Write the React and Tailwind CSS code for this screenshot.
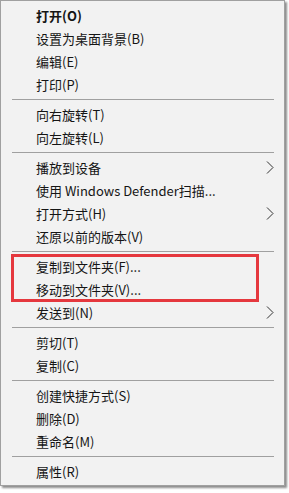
import React from "react";

const groups = [
  [
    { t: "打开(O)", bold: true },
    { t: "设置为桌面背景(B)" },
    { t: "编辑(E)" },
    { t: "打印(P)" },
  ],
  [{ t: "向右旋转(T)" }, { t: "向左旋转(L)" }],
  [
    { t: "播放到设备", sub: true },
    { t: "使用 Windows Defender扫描..." },
    { t: "打开方式(H)", sub: true },
    { t: "还原以前的版本(V)" },
  ],
  "HL",
  [{ t: "剪切(T)" }, { t: "复制(C)" }],
  [{ t: "创建快捷方式(S)" }, { t: "删除(D)" }, { t: "重命名(M)" }],
  [{ t: "属性(R)" }],
];

function Arrow() {
  return (
    <svg width="8" height="13" viewBox="0 0 8 13" className="absolute right-[10px] top-[5px]">
      <path d="M1 0.5 L7 6.5 L1 12.5" fill="none" stroke="#333" strokeWidth="1" />
    </svg>
  );
}

function Row({ item }) {
  return (
    <div className="relative h-[23px] flex items-center pl-[35px]">
      <span
        className={
          "text-[13px] leading-none text-[#151515] whitespace-nowrap " +
          (item.bold ? "font-bold" : "")
        }
      >
        {item.t}
      </span>
      {item.sub && <Arrow />}
    </div>
  );
}

function Sep() {
  return (
    <div className="h-[7px] flex items-center pl-[11px] pr-[10px]">
      <div className="h-px w-full bg-[#a0a0a0]" />
    </div>
  );
}

export default function App() {
  return (
    <div className="w-[289px] h-[493px] bg-white">
      <div
        className="w-[285px] border border-[#a0a0a0] bg-[#f2f2f2] pt-[3px] pb-[2px] shadow-[2px_2px_2px_rgba(0,0,0,0.45)]"
        style={{ fontFamily: '"Noto Sans CJK SC", "Noto Sans", sans-serif' }}
      >
        {groups.map((g, i) => (
          <React.Fragment key={i}>
            {i > 0 && <Sep />}
            {g === "HL" ? (
              <div className="relative">
                <Row item={{ t: "复制到文件夹(F)..." }} />
                <Row item={{ t: "移动到文件夹(V)..." }} />
                <Row item={{ t: "发送到(N)", sub: true }} />
                <div className="absolute left-[10px] top-[-1px] w-[248px] h-[48px] border-[3px] border-[#e5383e]" />
              </div>
            ) : (
              g.map((it, j) => <Row key={j} item={it} />)
            )}
          </React.Fragment>
        ))}
      </div>
    </div>
  );
}
